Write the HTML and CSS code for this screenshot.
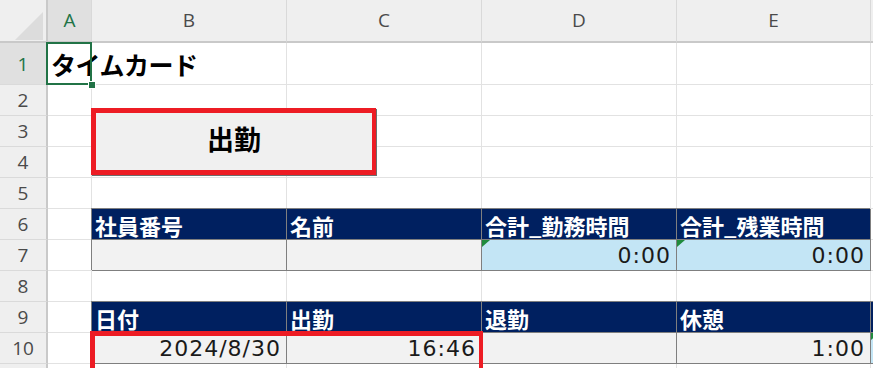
FILE: index.html
```html
<!DOCTYPE html>
<html lang="ja">
<head>
<meta charset="utf-8">
<title>タイムカード</title>
<link rel="stylesheet" href="styles.css">
</head>
<body>
<div class="sheet">
  <div class="corner"><svg class="corner-tri" width="47" height="41" viewBox="0 0 47 41"><polygon points="15,40 43,40 43,12" fill="#dcdcdc"/></svg></div>
  <div class="ch sel">A</div>
  <div class="ch">B</div>
  <div class="ch">C</div>
  <div class="ch">D</div>
  <div class="ch">E</div>
  <div class="ch"></div>

  <div class="rh sel">1</div>
  <div class="c title-cell"><span class="title">タイムカード</span></div>
  <div class="c"></div><div class="c"></div><div class="c"></div><div class="c"></div><div class="c"></div>

  <div class="rh">2</div>
  <div class="c"></div><div class="c"></div><div class="c"></div><div class="c"></div><div class="c"></div><div class="c"></div>

  <div class="rh">3</div>
  <div class="c"></div><div class="c"></div><div class="c"></div><div class="c"></div><div class="c"></div><div class="c"></div>

  <div class="rh">4</div>
  <div class="c"></div><div class="c"></div><div class="c"></div><div class="c"></div><div class="c"></div><div class="c"></div>

  <div class="rh">5</div>
  <div class="c"></div><div class="c"></div><div class="c"></div><div class="c"></div><div class="c"></div><div class="c"></div>

  <div class="rh">6</div>
  <div class="c"></div>
  <div class="c th">社員番号</div>
  <div class="c th">名前</div>
  <div class="c th">合計_勤務時間</div>
  <div class="c th">合計_残業時間</div>
  <div class="c"></div>

  <div class="rh">7</div>
  <div class="c"></div>
  <div class="c td"></div>
  <div class="c td"></div>
  <div class="c td blue flag">0:00</div>
  <div class="c td blue flag">0:00</div>
  <div class="c"></div>

  <div class="rh">8</div>
  <div class="c"></div><div class="c"></div><div class="c"></div><div class="c"></div><div class="c"></div><div class="c"></div>

  <div class="rh">9</div>
  <div class="c"></div>
  <div class="c th">日付</div>
  <div class="c th">出勤</div>
  <div class="c th">退勤</div>
  <div class="c th">休憩</div>
  <div class="c th"></div>

  <div class="rh">10</div>
  <div class="c"></div>
  <div class="c td hl">2024/8/30</div>
  <div class="c td">16:46</div>
  <div class="c td"></div>
  <div class="c td">1:00</div>
  <div class="c td blue flag"></div>

  <div class="rh"></div>
  <div class="c"></div><div class="c"></div><div class="c"></div><div class="c"></div><div class="c"></div><div class="c"></div>

  <div class="selection"><span class="handle"></span></div>
  <div class="button">出勤</div>
</div>
</body>
</html>
```

FILE: styles.css
```css
html, body {
  margin: 0;
  padding: 0;
  background: #ffffff;
  overflow: hidden;
}

.sheet {
  position: relative;
  display: grid;
  grid-template-columns: 48px 44px 195px 195px 195px 194px 30px;
  grid-template-rows: 43px 42px repeat(10, 31px);
  width: 873px;
  height: 368px;
  overflow: hidden;
  font-family: "Noto Sans CJK JP", sans-serif;
}

.corner {
  background: #efefef;
  border-right: 2px solid #c9c9c9;
  border-bottom: 2px solid #c9c9c9;
  box-sizing: border-box;
  overflow: hidden;
}

.corner-tri {
  display: block;
}

.ch {
  background: #efefef;
  border-right: 1px solid #d9d9d9;
  border-bottom: 2px solid #c9c9c9;
  box-sizing: border-box;
  display: flex;
  align-items: center;
  justify-content: center;
  font-family: "Open Sans", sans-serif;
  font-size: 19px;
  color: #4a4a4a;
  padding-bottom: 2px;
}

.rh {
  background: #efefef;
  border-right: 2px solid #c9c9c9;
  border-bottom: 1px solid #dadada;
  box-sizing: border-box;
  display: flex;
  align-items: center;
  justify-content: center;
  font-family: "Open Sans", sans-serif;
  font-size: 19px;
  color: #4a4a4a;
}

.sel {
  background: #e0e0e0;
  color: #217346;
}

.c {
  border-right: 1px solid #e2e2e2;
  border-bottom: 1px solid #e2e2e2;
  box-sizing: border-box;
  min-width: 0;
}

.title-cell {
  display: flex;
  align-items: center;
  padding-left: 3px;
  white-space: nowrap;
  overflow: visible;
}

.title {
  font-size: 25px;
  font-weight: 700;
  color: #000;
  letter-spacing: -0.5px;
}

.th {
  background: #002060;
  color: #ffffff;
  font-weight: 700;
  font-size: 22px;
  padding-left: 3px;
  padding-top: 2px;
  display: flex;
  align-items: center;
  white-space: nowrap;
  overflow: hidden;
  border-right-color: #7f7f7f;
  border-bottom-color: #7f7f7f;
  box-shadow: -1px -1px 0 #7f7f7f;
}

.td {
  position: relative;
  background: #f2f2f2;
  display: flex;
  align-items: center;
  justify-content: flex-end;
  padding-right: 5px;
  padding-top: 1px;
  font-family: "DejaVu Sans", sans-serif;
  font-size: 22px;
  letter-spacing: 1px;
  color: #1a1a1a;
  border-right-color: #7f7f7f;
  border-bottom-color: #7f7f7f;
  box-shadow: -1px -1px 0 #7f7f7f;
}

.blue {
  background: #c3e5f5;
}

.flag::before {
  content: "";
  position: absolute;
  left: 0;
  top: 0;
  width: 0;
  height: 0;
  border-top: 7px solid #1f8b3c;
  border-right: 8px solid transparent;
}

.hl::after {
  content: "";
  position: absolute;
  left: -2px;
  top: -2px;
  width: 393px;
  height: 45px;
  border: 5px solid #ed1c24;
  border-right-width: 4px;
  box-sizing: border-box;
  z-index: 2;
}

.selection {
  position: absolute;
  left: 46px;
  top: 42px;
  width: 46px;
  height: 43px;
  border: 2px solid #217346;
  box-sizing: border-box;
  z-index: 3;
}

.handle {
  position: absolute;
  right: -5px;
  bottom: -5px;
  width: 6px;
  height: 6px;
  background: #217346;
  outline: 1px solid #ffffff;
}

.button {
  position: absolute;
  left: 91px;
  top: 108px;
  width: 285px;
  height: 67px;
  box-sizing: border-box;
  border: 5px solid #ed1c24;
  border-right-width: 4px;
  background: #f0f0f0;
  box-shadow: 1px 1px 0 #6d6d6d;
  display: flex;
  align-items: center;
  justify-content: center;
  padding-bottom: 6px;
  font-size: 27px;
  font-weight: 700;
  color: #000;
  z-index: 3;
}
```
